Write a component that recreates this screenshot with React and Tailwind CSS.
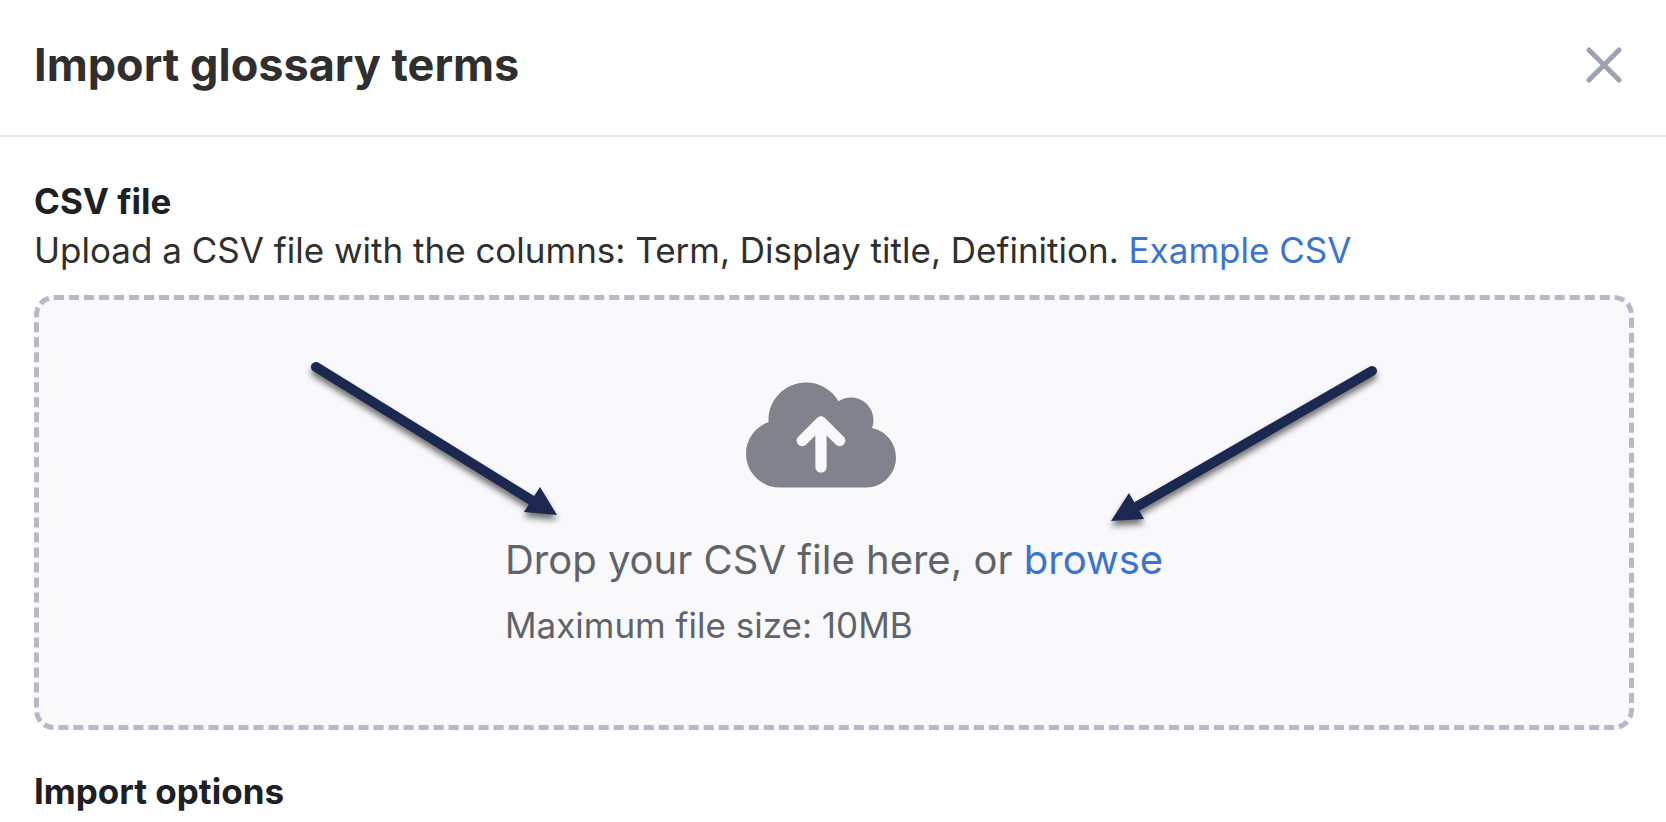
import { FaCloudArrowUp } from 'react-icons/fa6'

const CloseIcon = () => (
  <svg viewBox="0 0 36 36" className="h-9 w-9" fill="none" stroke="currentColor" strokeWidth="5" strokeLinecap="round">
    <path d="M3 3 33 33M33 3 3 33" />
  </svg>
)

const ModalHeader = () => (
  <header className="flex items-center justify-between border-b-2 border-[#e6e6ed] pt-[33px] pr-[44px] pb-[39px] pl-[34px]">
    <h1 className="text-[45px] leading-[63px] font-bold text-[#2f2f2f]">Import glossary terms</h1>
    <button type="button" aria-label="Close" className="text-[#9fa2b0]">
      <CloseIcon />
    </button>
  </header>
)

const Dropzone = () => (
  <div className="relative mt-[20px] flex flex-col items-center rounded-[20px] border-5 border-dashed border-[#b9b8c6] bg-[#f9f9fc] py-[75px] text-[#606369]">
    <FaCloudArrowUp className="mr-[26px] h-[120px] w-[150px] text-[#81838c]" />
    <div className="mt-[37px]">
      <p className="text-[40px] leading-[56px]">
        Drop your CSV file here, or{' '}
        <label htmlFor="csv-file" className="cursor-pointer text-[#3b73d1]">browse</label>
      </p>
      <p className="mt-[13px] text-[35px] leading-[49px]">Maximum file size: 10MB</p>
    </div>
    <input id="csv-file" type="file" accept=".csv" className="sr-only" />

    {/* Pointers to the upload prompt */}
    <svg
      viewBox="0 0 1068 180"
      className="pointer-events-none absolute top-[57px] left-1/2 w-[1068px] -translate-x-1/2 overflow-visible text-[#1c284f] drop-shadow-[0_5px_3px_rgba(0,0,0,0.55)]"
      fill="currentColor"
    >
      <path d="M16 10 236 146" stroke="currentColor" strokeWidth="10" strokeLinecap="round" />
      <path d="M257 158 240 130 224 155Z" />
      <path d="M1072 14 836 150" stroke="currentColor" strokeWidth="10" strokeLinecap="round" />
      <path d="M811 164 829 136 844 162Z" />
    </svg>
  </div>
)

const App = () => (
  <div className="w-full bg-white font-['Inter',sans-serif]">
    <ModalHeader />
    <main className="pt-[40px] pr-[32px] pl-[34px]">
      <h2 className="text-[35px] leading-[49px] font-bold text-[#1d2025]">CSV file</h2>
      <p className="text-[35px] leading-[49px] text-[#2f2f2f]">
        Upload a CSV file with the columns: Term, Display title, Definition.{' '}
        <a href="#example-csv" className="text-[#3b73d1]">Example CSV</a>
      </p>
      <Dropzone />
      <h2 className="mt-[37px] text-[35px] leading-[49px] font-bold text-[#1d2025]">Import options</h2>
    </main>
  </div>
)

export default App
